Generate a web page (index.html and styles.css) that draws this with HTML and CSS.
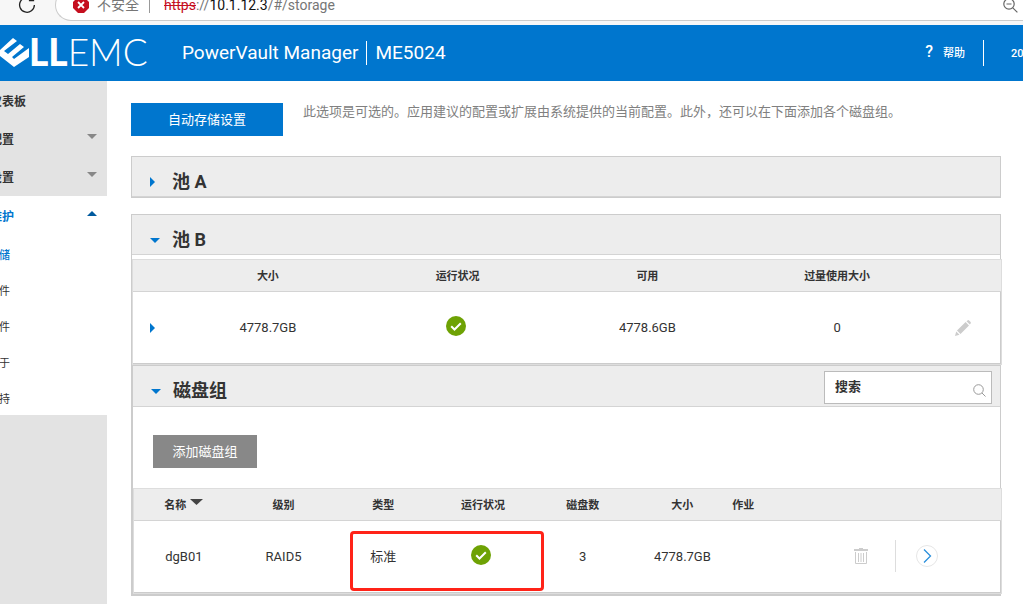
FILE: index.html
```html
<!DOCTYPE html>
<html lang="zh-CN">

<head>
	<title>PowerVault Manager</title>
	<meta charset="utf-8">
	<meta name="viewport" content="width=device-width, initial-scale=1">
	<link rel="stylesheet" href="styles.css">
</head>

<body>
	<div class="browser">
		<button class="reload" aria-label="刷新">
			<svg width="18" height="18" viewBox="0 0 18 18"><path d="M14.2 3.6A7.4 7.4 0 1 0 16.4 9M15.5 0v4.6h-4.6" fill="none" stroke="#222" stroke-width="1.3"/></svg>
		</button>
		<div class="address">
			<svg width="16" height="16" viewBox="0 0 16 16"><path d="M5 0h6l5 5v6l-5 5H5l-5-5V5z" fill="#c50f1f"/><path d="M5 5l6 6M11 5l-6 6" stroke="#fff" stroke-width="1.8"/></svg>
			<span class="unsafe">不安全</span>
			<span class="url"><s>https</s>://<b>10.1.12.3</b>/#/storage</span>
			<svg class="zoom" width="15" height="15" viewBox="0 0 15 15"><g fill="none" stroke="#666" stroke-width="1.2"><circle cx="6" cy="6" r="5.2"/><path d="M3.5 6h5M9.8 9.8l4.6 4.6"/></g></svg>
		</div>
	</div>

	<header class="top">
		<div class="logo">
			<svg width="29" height="30" viewBox="0 0 29 30"><path d="M0 13L13 1l4 3L4 14l4 3L20 7l4 3-12 10 2 2 15-11v9L14 30 0 19z" fill="#fff"/></svg>
			<span class="logo-ll">LL</span>
			<span class="logo-emc">EMC</span>
		</div>
		<div class="title">
			<span>PowerVault Manager</span>
			<span class="model">ME5024</span>
		</div>
		<a class="help" href="#help"><b>?</b>帮助</a>
		<span class="date">20</span>
	</header>

	<div class="page">
		<nav class="side">
			<ul class="menu">
				<li><a href="#dashboard">仪表板</a></li>
				<li><a href="#provisioning">配置<svg width="12" height="5"><path d="M1 0h10L6 5z"/></svg></a></li>
				<li><a href="#settings">设置<svg width="12" height="5"><path d="M1 0h10L6 5z"/></svg></a></li>
			</ul>
			<div class="open">
				<a href="#maintenance">维护<svg width="12" height="5"><path d="M1 5h10L6 0z"/></svg></a>
				<ul class="sub">
					<li><a class="on" href="#/storage">存储</a></li>
					<li><a href="#/hardware">硬件</a></li>
					<li><a href="#/firmware">固件</a></li>
					<li><a href="#/about">关于</a></li>
					<li><a href="#/support">支持</a></li>
				</ul>
			</div>
		</nav>

		<main>
			<div class="intro">
				<button class="btn blue">自动存储设置</button>
				<p>此选项是可选的。应用建议的配置或扩展由系统提供的当前配置。此外，还可以在下面添加各个磁盘组。</p>
			</div>

			<section class="panel">
				<h2 class="bar">
					<button class="toggle"><svg width="10" height="10"><path d="M0 0l5 5-5 5z"/></svg>池 A</button>
				</h2>
			</section>

			<section class="panel">
				<h2 class="bar">
					<button class="toggle"><svg width="10" height="10"><path d="M0 3h10L5 8z"/></svg>池 B</button>
				</h2>
				<div class="wrap pool">
					<table>
						<colgroup><col class="c-caret"><col><col><col><col><col class="c-edit"></colgroup>
						<thead>
							<tr>
								<th></th>
								<th>大小</th>
								<th>运行状况</th>
								<th>可用</th>
								<th>过量使用大小</th>
								<th></th>
							</tr>
						</thead>
						<tbody>
							<tr>
								<td class="caret"><button class="icon" aria-label="展开"><svg width="6" height="10"><path d="M0 0l5 5-5 5z" fill="#0076ce"/></svg></button></td>
								<td>4778.7GB</td>
								<td class="health"><svg class="ok" width="20" height="20"><circle cx="10" cy="10" r="10" fill="#6ea204"/><path d="M5.2 10.2l3.3 3.3 6.3-6.2" fill="none" stroke="#fff" stroke-width="2"/></svg></td>
								<td>4778.6GB</td>
								<td>0</td>
								<td class="edit"><button class="icon" aria-label="编辑"><svg width="16" height="16"><path d="M0 16l1.2-4.5 3.3 3.3zM2 10.5L10.6 2 14 5.4 5.5 14zM11.5 1.2L12.5.4q.8-.6 1.6 0l1.5 1.5q.6.8 0 1.6l-.8 1z" fill="#ccc"/></svg></button></td>
							</tr>
						</tbody>
					</table>
				</div>

				<div class="group">
					<div class="bar group-bar">
						<h2><button class="toggle"><svg width="10" height="10"><path d="M0 3h10L5 8z"/></svg>磁盘组</button></h2>
						<label class="search">
							<input type="text" placeholder="搜索" aria-label="搜索">
							<svg width="13" height="13"><g fill="none" stroke="#999"><circle cx="5.5" cy="5.5" r="4.8"/><path d="M9 9l3.5 3.5"/></g></svg>
						</label>
					</div>
					<button class="btn grey">添加磁盘组</button>
					<div class="wrap">
						<table>
							<colgroup><col class="c"><col class="c"><col class="c"><col class="c"><col class="c"><col class="c"><col><col class="c-act"></colgroup>
							<thead>
								<tr>
									<th><button class="sort">名称<svg width="13" height="7"><path d="M0 0h13L6.5 6z" fill="#444"/></svg></button></th>
									<th>级别</th>
									<th>类型</th>
									<th>运行状况</th>
									<th>磁盘数</th>
									<th>大小</th>
									<th class="left">作业</th>
									<th></th>
								</tr>
							</thead>
							<tbody>
								<tr>
									<td>dgB01</td>
									<td>RAID5</td>
									<td class="marked">标准<span class="mark"></span></td>
									<td class="health"><svg class="ok" width="20" height="20"><circle cx="10" cy="10" r="10" fill="#6ea204"/><path d="M5.2 10.2l3.3 3.3 6.3-6.2" fill="none" stroke="#fff" stroke-width="2"/></svg></td>
									<td>3</td>
									<td>4778.7GB</td>
									<td></td>
									<td>
										<div class="actions">
											<button class="icon" aria-label="删除"><svg width="14" height="16"><path d="M0 1h5V0h4v1h5v2H0z" fill="#ccc"/><path d="M1.5 4v11.5h11V4M4.5 5v9M7 5v9M9.5 5v9" fill="none" stroke="#ccc"/></svg></button>
											<button class="icon next" aria-label="详细信息"><svg width="22" height="22"><circle cx="11" cy="11" r="10.5" fill="none" stroke="#e6e6e6"/><path d="M8 4.500l6.500 6.500L8 17.500" fill="none" stroke="#2a8fdc" stroke-width="1.3"/></svg></button>
										</div>
									</td>
								</tr>
							</tbody>
						</table>
					</div>
				</div>
			</section>
		</main>
	</div>
</body>

</html>
```

FILE: styles.css
```css
* {
	box-sizing: border-box;
}

body {
	margin: 0;
	height: 100vh;
	overflow: hidden;
	display: flex;
	flex-direction: column;
	font-family: Roboto, "Noto Sans CJK SC", sans-serif;
	font-size: 13px;
	color: #333;
	background: #fff;
}

button {
	font: inherit;
	color: inherit;
	background: none;
	border: 0;
	padding: 0;
	cursor: pointer;
}

a {
	color: inherit;
	text-decoration: none;
}

ul {
	list-style: none;
	margin: 0;
	padding: 0;
}

svg {
	display: block;
	flex: none;
}

h2,
p {
	margin: 0;
}

/* browser bar */
.browser {
	flex: none;
	height: 25px;
	padding: 0 0 4px 18px;
	display: flex;
	align-items: flex-end;
	gap: 19px;
	overflow: hidden;
	background: #f7f7f7;
}

.reload {
	padding-bottom: 7px;
}

.address {
	flex: 1;
	height: 32px;
	padding: 0 5px 0 17px;
	display: flex;
	align-items: center;
	border: 1px solid #ccc;
	border-right: 0;
	border-radius: 16px 0 0 16px;
	background: #fff;
	color: #767676;
	font-family: "Open Sans", "Noto Sans CJK SC", sans-serif;
	font-size: 14px;
}

.unsafe {
	margin-left: 8px;
	padding-right: 10px;
	border-right: 1px solid #999;
	line-height: 16px;
}

.url {
	margin-left: 14px;
	font-family: Roboto, sans-serif;
}

.url s {
	color: #c50f1f;
}

.url b {
	color: #111;
	font-weight: normal;
}

.zoom {
	margin-left: auto;
}

/* header */
.top {
	flex: none;
	height: 56px;
	display: flex;
	align-items: center;
	overflow: hidden;
	background: #0076ce;
	color: #fff;
}

.logo {
	width: 182px;
	display: flex;
	align-items: center;
	padding-bottom: 2px;
	font-family: Lato, sans-serif;
	font-size: 37px;
	line-height: 36px;
}

.logo-ll {
	font-weight: 900;
}

.logo-emc {
	font-weight: 300;
}

.title {
	display: flex;
	gap: 8px;
	font-size: 19px;
	line-height: 24px;
}

.model {
	padding-left: 8px;
	border-left: 1px solid #fff;
}

.help {
	margin-left: auto;
	padding-right: 18px;
	display: flex;
	align-items: baseline;
	gap: 10px;
	border-right: 1px solid #fff;
	font-size: 11px;
	line-height: 24px;
	font-weight: 500;
}

.help b {
	font-size: 16px;
	font-weight: 500;
}

.date {
	width: 39px;
	padding-left: 27px;
	font-size: 11px;
	font-weight: 500;
}

/* side menu, its left part is scrolled out */
.page {
	flex: 1;
	display: flex;
	min-height: 0;
}

.side {
	flex: none;
	width: 107px;
	overflow: hidden;
	background: #e3e3e3;
	font-size: 12px;
	font-weight: bold;
}

.menu {
	padding-bottom: 1px;
}

.menu a,
.open>a {
	height: 38px;
	margin-left: -10px;
	padding-right: 9px;
	display: flex;
	align-items: center;
	justify-content: space-between;
}

.side svg {
	margin-bottom: 4px;
}

.menu svg {
	fill: #888;
}

.open {
	background: #fff;
}

.open>a {
	color: #0076ce;
}

.open svg {
	fill: #005a9e;
}

.sub {
	margin-left: -12px;
	padding-top: 7px;
	display: grid;
	gap: 6px;
	font-size: 11px;
	font-weight: normal;
	line-height: 30px;
}

.sub .on {
	color: #0076ce;
	font-weight: 500;
}

/* content */
main {
	flex: 1;
	min-width: 0;
	padding: 22px 22px 8px 24px;
	overflow: hidden;
}

.intro {
	display: flex;
	gap: 20px;
	margin-bottom: 20px;
}

.intro p {
	line-height: 18px;
	color: #808080;
}

.btn {
	flex: none;
	height: 33px;
	padding-bottom: 2px;
	color: #fff;
}

.blue {
	width: 152px;
	background: #0076ce;
}

.grey {
	width: 104px;
	margin: 28px 20px 20px;
	display: block;
	background: #888;
}

.panel {
	margin-bottom: 16px;
	border: 1px solid #ccc;
}

.bar {
	height: 40px;
	padding: 8px 0 0 18px;
	background: #ededed;
	border-bottom: 1px solid #d4d4d4;
	font-size: 18px;
}

.toggle {
	height: 30px;
	display: flex;
	align-items: center;
	gap: 12px;
	font-weight: bold;
}

.toggle svg {
	margin-top: 4px;
	fill: #0076ce;
}

.wrap {
	margin-right: -2px;
	border: 1px solid #ddd;
}

.pool {
	margin-top: 4px;
}

table {
	width: 100%;
	table-layout: fixed;
	border-spacing: 0;
	text-align: center;
}

th,
td {
	padding: 0;
}

th {
	height: 32px;
	padding-bottom: 2px;
	background: #ededed;
	border-bottom: 1px solid #d4d4d4;
	font-size: 11px;
}

td {
	height: 72px;
	border-bottom: 1px solid #ccc;
}

.c {
	width: 11.5%;
}

.c-caret {
	width: 40px;
}

.c-edit {
	width: 69px;
}

.c-act {
	width: 160px;
}

.left {
	text-align: left;
}

.caret {
	padding-left: 17px;
}

.edit {
	padding-left: 23px;
}

.health {
	padding: 0 4px 3px 0;
}

.ok {
	margin: 0 auto;
}

.icon {
	display: block;
}

.sort {
	display: inline-flex;
	gap: 4px;
	font-weight: bold;
}

.sort svg {
	margin-top: 3px;
}

.group {
	margin-right: -1px;
	border: 1px solid #ccc;
}

.group-bar {
	height: 41px;
	padding-right: 8px;
	display: flex;
	justify-content: space-between;
}

.group-bar h2 {
	font-size: 18px;
}

.search {
	width: 168px;
	height: 33px;
	margin-top: -3px;
	padding: 0 5px 0 10px;
	display: flex;
	align-items: center;
	background: #fff;
	border: 1px solid #bbb;
}

.search input {
	flex: 1;
	min-width: 0;
	padding: 0 0 2px;
	border: 0;
	outline: 0;
	font: inherit;
	font-size: 13px;
}

.search input::placeholder {
	color: #333;
	font-weight: bold;
}

.search svg {
	margin-top: 5px;
}

.actions {
	display: flex;
	justify-content: flex-end;
	align-items: center;
	gap: 27px;
	padding: 0 63px 2px 0;
}

.next {
	height: 32px;
	padding-left: 20px;
	border-left: 1px solid #ddd;
}

/* red frame round type and health */
.marked {
	position: relative;
	padding-bottom: 2px;
}

.mark {
	position: absolute;
	z-index: 1;
	top: 10px;
	left: 17px;
	width: 194px;
	height: 60px;
	border: 3px solid #ff2318;
	border-radius: 4px;
	pointer-events: none;
}
```
